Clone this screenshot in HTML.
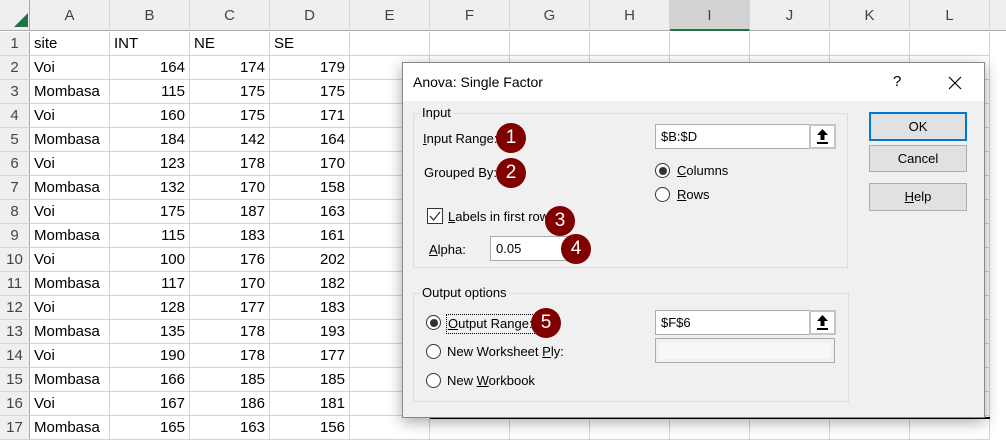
<!DOCTYPE html>
<html><head><meta charset="utf-8"><style>
*{margin:0;padding:0;box-sizing:border-box}
body{width:1006px;height:432px;overflow:hidden;background:#fff;position:relative;font-family:"Liberation Sans",sans-serif}
.a{position:absolute}
.hdr{position:absolute;top:0;height:31px;background:#efefef;border-right:1px solid #d4d4d4;border-bottom:1px solid #ababab;color:#444;font-size:15px;text-align:center;line-height:31px}
.rh{position:absolute;left:0;width:30px;height:24px;background:#efefef;border-right:1px solid #ababab;border-bottom:1px solid #d4d4d4;color:#444;font-size:15px;text-align:center;line-height:24px}
.c{position:absolute;height:24px;width:80px;border-right:1px solid #d4d4d4;border-bottom:1px solid #d4d4d4;font-size:15px;color:#000;line-height:24px;padding:0 4px;white-space:nowrap}
.r{text-align:right}
.dlg{position:absolute;left:402px;top:62px;width:583px;height:356px;background:#f0f0f0;border:1px solid #888;box-shadow:0 4px 14px rgba(0,0,0,.35);font-size:13px;color:#000}
.t{position:absolute;font-size:13px;white-space:nowrap}
.grp{position:absolute;border:1px solid #dcdcdc}
.lg{position:absolute;top:-9px;left:6px;background:#f0f0f0;padding:0 2px;font-size:13px}
.fld{position:absolute;background:#fff;border:1px solid #aaa;font-size:13px;padding-left:5px}
.btn{position:absolute;left:466px;width:98px;background:#e1e1e1;border:1px solid #adadad;text-align:center;font-size:13px}
.rad{position:absolute;width:15px;height:15px;border:1px solid #333;border-radius:50%;background:#fff}
.rad.on::after{content:"";position:absolute;left:2.5px;top:2.5px;width:8px;height:8px;border-radius:50%;background:#333}
.n{position:absolute;width:30px;height:30px;border-radius:50%;background:#800000;color:#fff;font-size:19px;text-align:center;line-height:30px}
.up{position:absolute;background:#fff;border:2px solid #c4c4c4}
u{text-decoration:underline}
</style></head><body>
<div class="hdr" style="left:0;width:30px;border-right:1px solid #ababab"></div>
<svg class="a" style="left:14px;top:13px" width="14" height="14"><polygon points="14,0 14,14 0,14" fill="#217346"/></svg>
<div class="hdr" style="left:30px;width:80px">A</div>
<div class="hdr" style="left:110px;width:80px">B</div>
<div class="hdr" style="left:190px;width:80px">C</div>
<div class="hdr" style="left:270px;width:80px">D</div>
<div class="hdr" style="left:350px;width:80px">E</div>
<div class="hdr" style="left:430px;width:80px">F</div>
<div class="hdr" style="left:510px;width:80px">G</div>
<div class="hdr" style="left:590px;width:80px">H</div>
<div class="hdr" style="left:670px;width:80px;background:#d3d3d3;border-bottom:2px solid #217346">I</div>
<div class="hdr" style="left:750px;width:80px">J</div>
<div class="hdr" style="left:830px;width:80px">K</div>
<div class="hdr" style="left:910px;width:80px">L</div>
<div class="hdr" style="left:990px;width:30px"></div>
<div id="g"></div>
<script>
var d=[["site","INT","NE","SE"],["Voi",164,174,179],["Mombasa",115,175,175],["Voi",160,175,171],["Mombasa",184,142,164],["Voi",123,178,170],["Mombasa",132,170,158],["Voi",175,187,163],["Mombasa",115,183,161],["Voi",100,176,202],["Mombasa",117,170,182],["Voi",128,177,183],["Mombasa",135,178,193],["Voi",190,178,177],["Mombasa",166,185,185],["Voi",167,186,181],["Mombasa",165,163,156]];
var h="";
for(var i=0;i<17;i++){var y=32+i*24;
h+='<div class="rh" style="top:'+y+'px">'+(i+1)+'</div>';
for(var j=0;j<12;j++){var v=j<4?d[i][j]:"";var num=(typeof v=="number");
h+='<div class="c'+(num?' r':'')+'" style="left:'+(30+j*80)+'px;top:'+y+'px">'+v+'</div>';}}
document.getElementById("g").innerHTML=h;
</script>
<div class="a" style="left:430px;top:417px;width:560px;height:2px;background:#000"></div>
<div class="dlg">
 <div class="a" style="left:0;top:0;width:581px;height:38px;background:#fff"></div>
 <div class="t" style="left:10px;top:11px;font-size:14px">Anova: Single Factor</div>
 <div class="t" style="left:490px;top:10px;font-size:15px">?</div>
 <svg class="a" style="left:545px;top:13px" width="14" height="14"><path d="M1 1L13 13M13 1L1 13" stroke="#000" stroke-width="1.2"/></svg>
 <div class="grp" style="left:10px;top:50px;width:435px;height:155px"><div class="lg">Input</div></div>
 <div class="t" style="left:20px;top:68px"><u>I</u>nput Range:</div>
 <div class="n" style="left:93px;top:60px">1</div>
 <div class="fld" style="left:252px;top:61px;width:155px;height:25px;line-height:23px">$B:$D</div>
 <div class="up" style="left:406px;top:61px;width:27px;height:25px"><svg width="23" height="21"><path d="M11.5 3L6 9H9.5V14H13.5V9H17Z M6 16H17V18H6Z" fill="#000"/></svg></div>
 <div class="t" style="left:21px;top:102px">Grouped By:</div>
 <div class="n" style="left:93px;top:95px">2</div>
 <div class="rad on" style="left:252px;top:100px"></div><div class="t" style="left:274px;top:100px"><u>C</u>olumns</div>
 <div class="rad" style="left:252px;top:124px"></div><div class="t" style="left:274px;top:124px"><u>R</u>ows</div>
 <div class="a" style="left:24px;top:145px;width:16px;height:16px;border:1px solid #333;background:#fff"><svg width="14" height="14"><path d="M2 7L5.5 11L12 3" fill="none" stroke="#333" stroke-width="1.3"/></svg></div>
 <div class="t" style="left:45px;top:146px"><u>L</u>abels in first row</div>
 <div class="n" style="left:142px;top:143px">3</div>
 <div class="t" style="left:26px;top:179px"><u>A</u>lpha:</div>
 <div class="fld" style="left:87px;top:173px;width:80px;height:25px;line-height:23px">0.05</div>
 <div class="n" style="left:158px;top:171px">4</div>
 <div class="btn" style="top:49px;height:29px;line-height:25px;border:2px solid #0078d7">OK</div>
 <div class="btn" style="top:82px;height:27px;line-height:25px">Cancel</div>
 <div class="btn" style="top:120px;height:28px;line-height:26px"><u>H</u>elp</div>
 <div class="grp" style="left:10px;top:230px;width:436px;height:109px"><div class="lg">Output options</div></div>
 <div class="rad on" style="left:23px;top:252px"></div>
 <div class="t" style="left:43px;top:251px;border:1px dotted #000;padding:1px 1px;height:20px;width:89px"><u>O</u>utput Range:</div>
 <div class="n" style="left:128px;top:245px">5</div>
 <div class="fld" style="left:252px;top:247px;width:155px;height:25px;line-height:23px">$F$6</div>
 <div class="up" style="left:406px;top:247px;width:27px;height:25px"><svg width="23" height="21"><path d="M11.5 3L6 9H9.5V14H13.5V9H17Z M6 16H17V18H6Z" fill="#000"/></svg></div>
 <div class="a" style="left:252px;top:275px;width:180px;height:25px;border:1px solid #aaa;background:#f0f0f0"><div style="margin:3px;height:17px;background:#f7f7f7"></div></div>
 <div class="rad" style="left:23px;top:281px"></div><div class="t" style="left:44px;top:281px">New Worksheet <u>P</u>ly:</div>
 <div class="rad" style="left:23px;top:310px"></div><div class="t" style="left:44px;top:310px">New <u>W</u>orkbook</div>
</div>
</body></html>
